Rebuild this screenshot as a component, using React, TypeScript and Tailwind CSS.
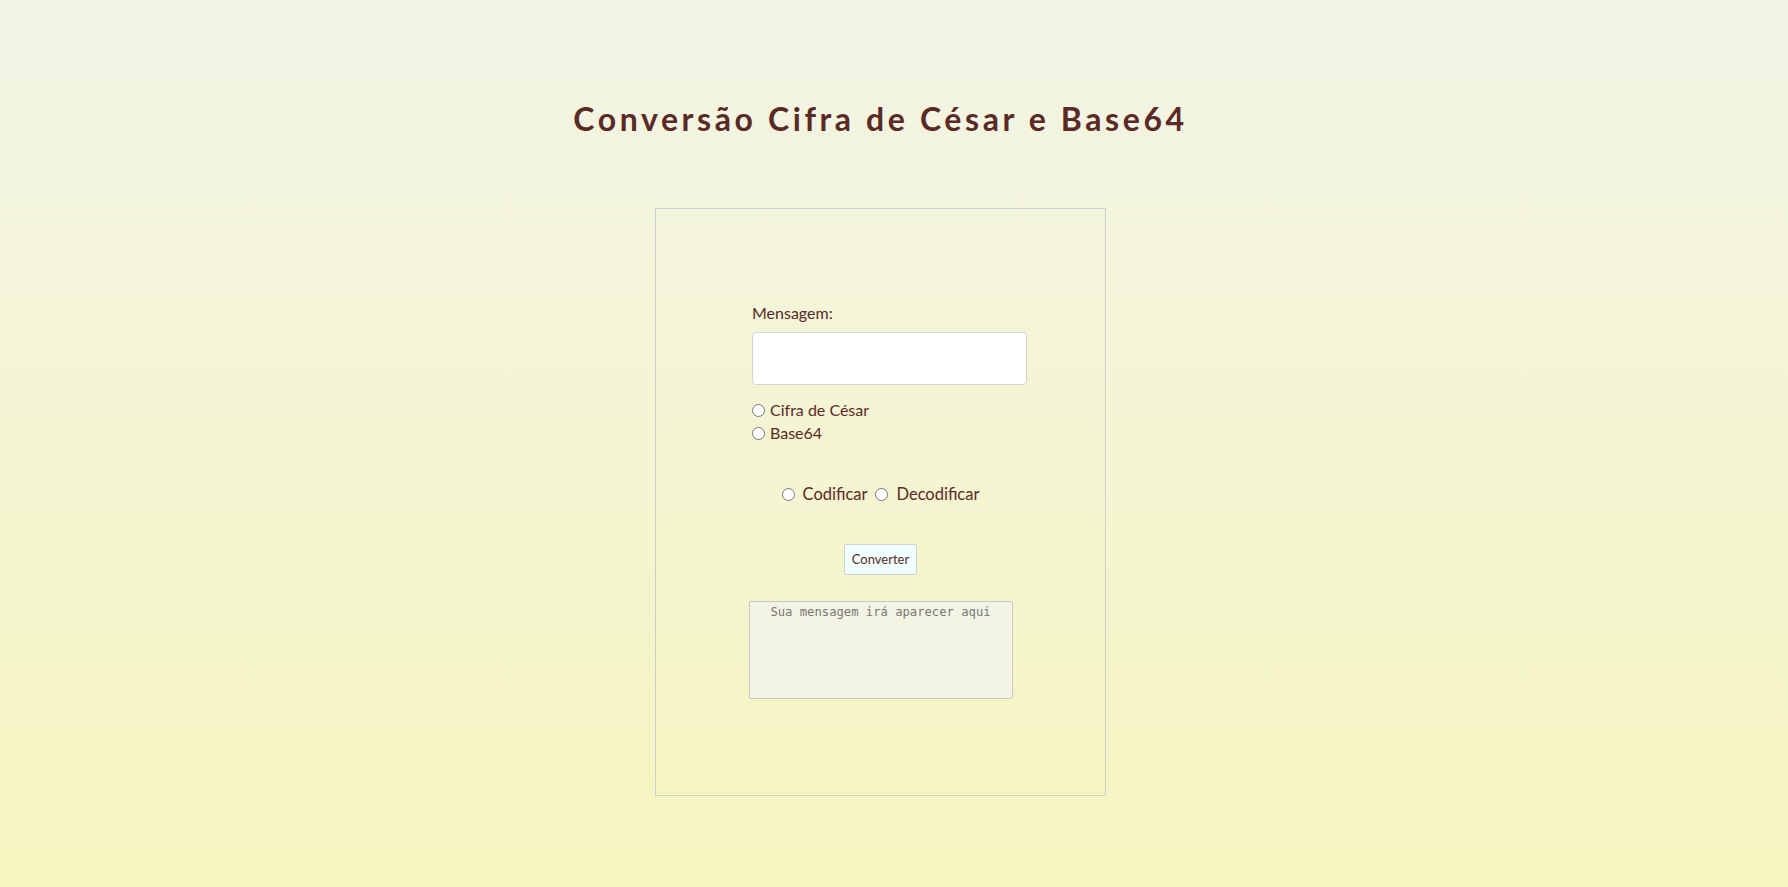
import React from "react";

export default function App() {
  return (
    <div
      className="min-h-screen w-full flex flex-col items-center pr-[27px] bg-[linear-gradient(to_bottom,#f3f4e6,#f5f5bf)] text-[#5a2a27]"
      style={{ fontFamily: "Lato, 'Open Sans', sans-serif" }}
    >
      <h1 className="mt-[99px] text-[32px] leading-[40px] font-bold tracking-[3.6px] text-[#5a2a27]">
        Conversão Cifra de César e Base64
      </h1>
      <div className="mt-[69px] w-[451px] h-[588px] border border-[#cfcfcf] flex flex-col items-center">
        <div className="self-start ml-[96px] mt-[92px] w-[275px] flex flex-col">
          <label className="text-[16px] leading-[24px]">Mensagem:</label>
          <input
            type="text"
            className="mt-[7px] w-[275px] h-[53px] bg-white border border-[#d4d4d4] rounded-[4px] outline-none"
          />
          <div className="mt-[15px] flex flex-col gap-[3px] text-[16px] leading-[20px]">
            <label className="flex items-center gap-[5px]">
              <input type="radio" name="tipo" className="m-0 w-[13px] h-[13px]" />
              <span>Cifra de César</span>
            </label>
            <label className="flex items-center gap-[5px]">
              <input type="radio" name="tipo" className="m-0 w-[13px] h-[13px]" />
              <span>Base64</span>
            </label>
          </div>
        </div>
        <div className="mt-[39px] flex items-center text-[16.5px] leading-[24px]">
          <label className="flex items-center gap-[8px]">
            <input type="radio" name="modo" className="m-0 w-[13px] h-[13px]" />
            <span>Codificar</span>
          </label>
          <label className="ml-[8px] flex items-center gap-[8px]">
            <input type="radio" name="modo" className="m-0 w-[13px] h-[13px]" />
            <span>Decodificar</span>
          </label>
        </div>
        <button className="mt-[38px] w-[73px] h-[31px] bg-[#f0ffff] border border-[#d0d0d0] rounded-[2px] text-[13px] text-[#5a2a27]">
          Converter
        </button>
        <textarea
          readOnly
          placeholder="Sua mensagem irá aparecer aqui"
          className="mt-[26px] w-[264px] h-[98px] bg-[#f4f4e4] border border-[#c8c8c8] rounded-[2px] text-center text-[12.2px] leading-[16px] pt-[2px] resize-none outline-none placeholder:text-[#777]"
          style={{ fontFamily: "'DejaVu Sans Mono', 'Liberation Mono', monospace" }}
        />
      </div>
    </div>
  );
}
